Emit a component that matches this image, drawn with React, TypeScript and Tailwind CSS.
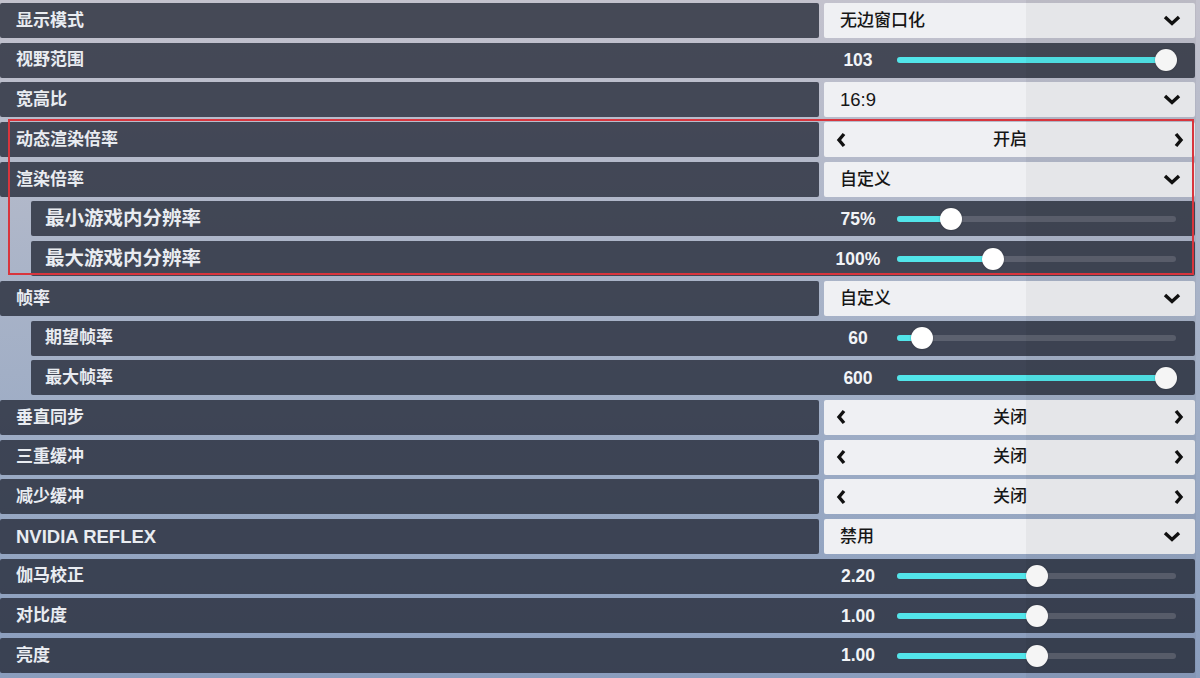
import type { ReactNode } from "react";

type Row =
  | { kind: "select"; label: string; value: string }
  | { kind: "toggle"; label: string; value: string }
  | { kind: "slider"; label: string; value: string; p: number; sub?: boolean; big?: boolean };

const rows: Row[] = [
  { kind: "select", label: "显示模式", value: "无边窗口化" },
  { kind: "slider", label: "视野范围", value: "103", p: 1 },
  { kind: "select", label: "宽高比", value: "16:9" },
  { kind: "toggle", label: "动态渲染倍率", value: "开启" },
  { kind: "select", label: "渲染倍率", value: "自定义" },
  { kind: "slider", label: "最小游戏内分辨率", value: "75%", p: 0.167, sub: true, big: true },
  { kind: "slider", label: "最大游戏内分辨率", value: "100%", p: 0.33, sub: true, big: true },
  { kind: "select", label: "帧率", value: "自定义" },
  { kind: "slider", label: "期望帧率", value: "60", p: 0.054, sub: true },
  { kind: "slider", label: "最大帧率", value: "600", p: 1, sub: true },
  { kind: "toggle", label: "垂直同步", value: "关闭" },
  { kind: "toggle", label: "三重缓冲", value: "关闭" },
  { kind: "toggle", label: "减少缓冲", value: "关闭" },
  { kind: "select", label: "NVIDIA REFLEX", value: "禁用" },
  { kind: "slider", label: "伽马校正", value: "2.20", p: 0.5 },
  { kind: "slider", label: "对比度", value: "1.00", p: 0.5 },
  { kind: "slider", label: "亮度", value: "1.00", p: 0.5 },
];

const font = "font-['Liberation_Sans','Noto_Sans_CJK_SC',sans-serif]";

function Chevron() {
  return (
    <svg width="18" height="11" viewBox="0 0 18 11">
      <path d="M2 2 L9 8.5 L16 2" fill="none" stroke="#111" strokeWidth="3.4" strokeLinejoin="miter" />
    </svg>
  );
}

function Arrow({ dir }: { dir: "left" | "right" }) {
  return (
    <svg width="11" height="16" viewBox="0 0 11 16">
      <path
        d={dir === "left" ? "M8 2 L3 8 L8 14" : "M3 2 L8 8 L3 14"}
        fill="none"
        stroke="#111"
        strokeWidth="3.4"
      />
    </svg>
  );
}

function Bar({ children, className = "" }: { children: ReactNode; className?: string }) {
  return (
    <div className={`flex h-full items-center rounded-[2px] bg-[#262a38]/[0.8] ${className}`}>
      {children}
    </div>
  );
}

function Label({ text, big }: { text: string; big?: boolean }) {
  const latin = /^[A-Z ]+$/.test(text);
  return (
    <span
      className={`font-semibold text-[#e9ecf1] ${big ? "text-[19.5px]" : latin ? "text-[18.5px]" : "text-[17px]"}`}
    >
      {text}
    </span>
  );
}

function Slider({ p }: { p: number }) {
  const x = p * 258;
  return (
    <div className="relative ml-[11px] mr-[19px] h-[6px] w-[279px] rounded-full bg-[#646876]/80">
      <div className="absolute left-0 top-0 h-[6px] rounded-full bg-[#52e5ea]" style={{ width: x + 11 }} />
      <div
        className="absolute top-[-8px] h-[22px] w-[22px] rounded-full bg-white shadow-[0_0_2px_rgba(0,0,0,0.3)]"
        style={{ left: x }}
      />
    </div>
  );
}

function SettingRow({ row }: { row: Row }) {
  if (row.kind === "slider") {
    return (
      <div className={`h-[35px] ${row.sub ? "ml-[31px]" : ""}`}>
        <Bar className={row.sub ? "pl-[14px]" : "pl-[16px]"}>
          <div className="flex-1">
            <Label text={row.label} big={row.big} />
          </div>
          <span className="w-[56px] text-center text-[17.5px] font-bold text-[#f2f4f7]">{row.value}</span>
          <Slider p={row.p} />
        </Bar>
      </div>
    );
  }
  const digits = /^[0-9:]+$/.test(row.value);
  return (
    <div className="flex h-[35px]">
      <div className="flex-1">
        <Bar className="pl-[16px]">
          <Label text={row.label} />
        </Bar>
      </div>
      <div
        className={`ml-[5px] flex w-[371px] items-center rounded-[2px] bg-[#eff0f3] font-medium text-[#161616] ${digits ? "text-[18.5px]" : "text-[17px]"}`}
      >
        {row.kind === "select" ? (
          <div className="flex w-full items-center justify-between pl-[16px] pr-[14px]">
            <span>{row.value}</span>
            <Chevron />
          </div>
        ) : (
          <div className="flex w-full items-center justify-between pl-[12px] pr-[11px]">
            <Arrow dir="left" />
            <span>{row.value}</span>
            <Arrow dir="right" />
          </div>
        )}
      </div>
    </div>
  );
}

export default function App() {
  return (
    <div
      className={`relative h-[678px] w-[1200px] overflow-hidden bg-[linear-gradient(180deg,#c3c2cd_0%,#aab4c8_40%,#9aaac4_70%,#8a9dbd_100%)] ${font}`}
    >
      <div className="flex flex-col gap-[4.7px] pr-[5px] pt-[3px]">
        {rows.map((r) => (
          <SettingRow key={r.label} row={r} />
        ))}
      </div>
      {/* subtle shading pane on the right */}
      <div className="pointer-events-none absolute bottom-0 left-[1026px] top-0 w-[170px] bg-black/[0.04]" />
      <div className="pointer-events-none absolute left-[8px] top-[119px] h-[156px] w-[1186px] border-2 border-[#d8353d]" />
    </div>
  );
}
